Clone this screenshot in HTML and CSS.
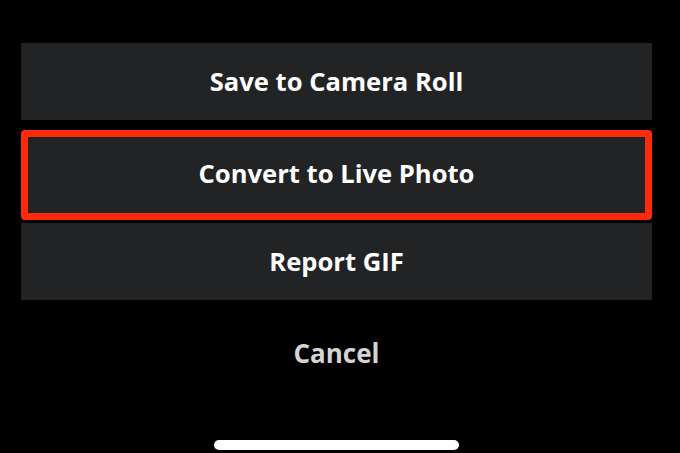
FILE: index.html
```html
<!DOCTYPE html>
<html>
<head>
<meta charset="utf-8">
<link rel="stylesheet" href="styles.css">
</head>
<body>
<div class="sheet">
  <div class="action">Save to Camera Roll</div>
  <div class="action highlighted">Convert to Live Photo</div>
  <div class="action last">Report GIF</div>
  <div class="cancel">Cancel</div>
  <div class="home-indicator"></div>
</div>
</body>
</html>
```
FILE: styles.css
```css
html, body {
  margin: 0;
  padding: 0;
  background: #000;
  width: 680px;
  height: 453px;
  overflow: hidden;
}
.sheet {
  margin: 0 28px 0 21px;
  padding-top: 43px;
  display: flex;
  flex-direction: column;
  align-items: stretch;
  font-family: "Open Sans", "Noto Sans", sans-serif;
}
.action {
  height: 77px;
  background: #222325;
  color: #fff;
  font-size: 25.6px;
  font-weight: 700;
  display: flex;
  align-items: center;
  justify-content: center;
  box-sizing: border-box;
}
.highlighted {
  margin-top: 10px;
  height: 90px;
  border: 7px solid #ff2a0c;
  border-radius: 4px;
  padding-bottom: 3px;
}
.last {
  margin-top: 3px;
}
.cancel {
  height: 106px;
  display: flex;
  align-items: center;
  justify-content: center;
  color: #d4d4d4;
  font-size: 26px;
  font-weight: 700;
}
.home-indicator {
  align-self: center;
  margin-top: 34px;
  width: 245px;
  height: 10px;
  border-radius: 5px;
  background: #fff;
}
```
